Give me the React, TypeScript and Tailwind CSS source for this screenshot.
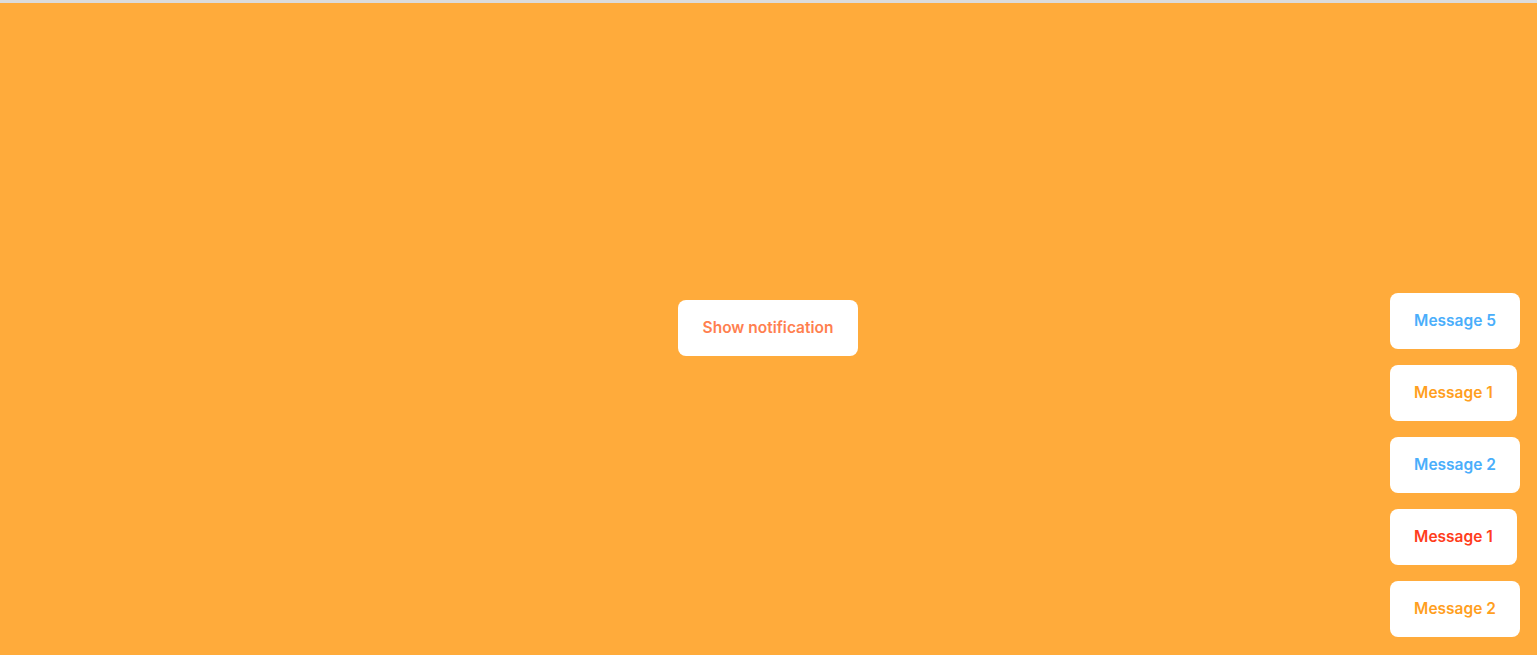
import React from 'react';

const toasts = [
  { id: 5, text: 'Message 5', color: 'text-[#4aaefb]' },
  { id: 4, text: 'Message 1', color: 'text-[#ff9f1f]' },
  { id: 3, text: 'Message 2', color: 'text-[#4aaefb]' },
  { id: 2, text: 'Message 1', color: 'text-[#ff3d1c]' },
  { id: 1, text: 'Message 2', color: 'text-[#ff9f1f]' },
];

export default function App() {
  return (
    <div className="h-[655px] w-full flex flex-col font-['Inter',sans-serif]">
      <div className="h-[3px] bg-[#dcdcdc]" />
      <div className="relative flex-1 bg-[#ffab3b] flex items-center justify-center pb-[2px] pr-[1px]">
        <button className="h-[56px] w-[180px] rounded-lg bg-white text-[15.5px] font-semibold text-[#ff7f4f]">
          Show notification
        </button>

        <div className="absolute right-[17px] bottom-[18px] flex flex-col items-start gap-4">
          {toasts.map((t) => (
            <div
              key={t.id}
              className={`h-[56px] px-6 flex items-center rounded-lg bg-white text-[15.5px] font-semibold ${t.color}`}
            >
              {t.text}
            </div>
          ))}
        </div>
      </div>
    </div>
  );
}
